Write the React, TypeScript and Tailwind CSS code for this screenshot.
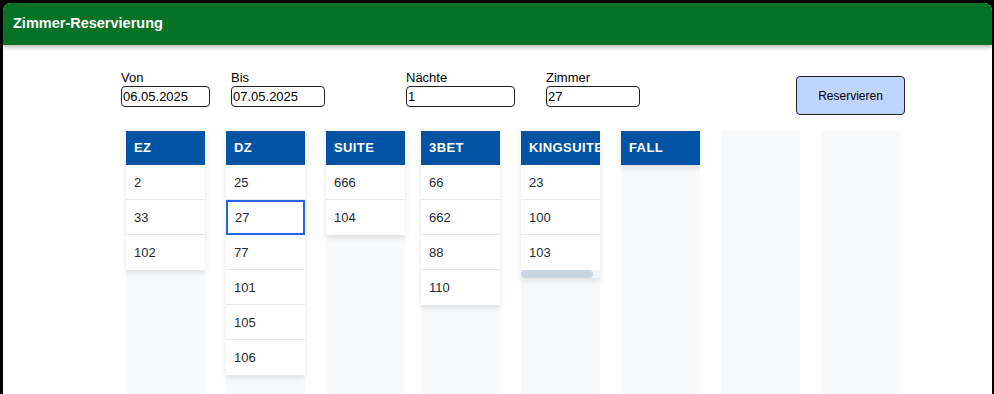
import React from 'react'

type Column = {
  name: string
  rooms: string[]
  scroll?: boolean
}

const columns: Column[] = [
  { name: 'EZ', rooms: ['2', '33', '102'] },
  { name: 'DZ', rooms: ['25', '27', '77', '101', '105', '106'] },
  { name: 'Suite', rooms: ['666', '104'] },
  { name: '3Bet', rooms: ['66', '662', '88', '110'] },
  { name: 'Kingsuite', rooms: ['23', '100', '103'], scroll: true },
  { name: 'Fall', rooms: [] },
]

const selected = '27'

// spacing before each column, px (taken from the layout)
const gaps = ['ml-[123px]', 'ml-[21px]', 'ml-[21px]', 'ml-[16px]', 'ml-[21px]', 'ml-[21px]', 'ml-[21px]', 'ml-[21px]']

function Field({ label, value, width, className }: { label: string; value: string; width: string; className: string }) {
  return (
    <label className={`flex flex-col ${className}`}>
      <span className="text-[13px] leading-[15px] text-black">{label}</span>
      <input
        defaultValue={value}
        className={`${width} mt-px h-[21px] rounded-[4px] border border-[#222] px-[1px] text-[13px] text-black outline-none`}
      />
    </label>
  )
}

function RoomColumn({ col, className }: { col: Column; className: string }) {
  return (
    <div className={`w-[79px] h-[280px] shrink-0 bg-[#f8f9fb] ${className}`}>
      <div className="bg-white shadow-[0_3px_6px_rgba(0,0,0,0.1)]">
        <div className="h-[34px] bg-[#0253a4] px-2 flex items-center overflow-hidden whitespace-nowrap">
          <span className="text-[13px] font-bold uppercase tracking-[0.4px] text-white">{col.name}</span>
        </div>
        {col.rooms.map((r, i) => (
          <div
            key={r}
            className={`h-[35px] flex items-center px-2 pt-px text-[13px] text-[#1f2937] ${
              r === selected
                ? 'border-2 border-[#2563eb] px-[7px]'
                : i < col.rooms.length - 1
                  ? 'border-b border-[#e5e7eb]'
                  : ''
            }`}
          >
            {r}
          </div>
        ))}
        {col.scroll && (
          <div className="h-[8px] bg-[#f1f5f9]">
            <div className="h-[8px] w-[72px] rounded-full bg-[#cbd5e1]" />
          </div>
        )}
      </div>
    </div>
  )
}

export default function App() {
  return (
    <div className="h-[394px] overflow-hidden bg-black pt-[3px] pl-[3px] pr-[2px] font-['Liberation_Sans',Arial,sans-serif]">
      <div className="h-full rounded-t-lg bg-white">
        {/* Header */}
        <header className="relative z-10 flex h-[42px] items-center rounded-t-lg bg-[#067226] px-[10px] shadow-[0_2px_5px_rgba(0,0,0,0.3)]">
          <h1 className="text-[14.5px] font-bold text-white">Zimmer-Reservierung</h1>
        </header>

        {/* Form */}
        <div className="flex items-start pt-[25px] pl-[118px]">
          <Field label="Von" value="06.05.2025" width="w-[89px]" className="" />
          <Field label="Bis" value="07.05.2025" width="w-[94px]" className="ml-[21px]" />
          <Field label="Nächte" value="1" width="w-[109px]" className="ml-[81px]" />
          <Field label="Zimmer" value="27" width="w-[94px]" className="ml-[31px]" />
          <button className="ml-[156px] mt-[6px] h-[39px] w-[109px] rounded-[4px] border border-[#222] bg-[#bfd4fe] text-[12px] text-black">
            Reservieren
          </button>
        </div>

        {/* Columns */}
        <div className="mt-[16px] flex">
          {columns.map((c, i) => (
            <RoomColumn key={c.name} col={c} className={gaps[i]} />
          ))}
          <div className={`w-[79px] h-[280px] shrink-0 bg-[#f8f9fb] ${gaps[6]}`} />
          <div className={`w-[79px] h-[280px] shrink-0 bg-[#f8f9fb] ${gaps[7]}`} />
        </div>
      </div>
    </div>
  )
}
